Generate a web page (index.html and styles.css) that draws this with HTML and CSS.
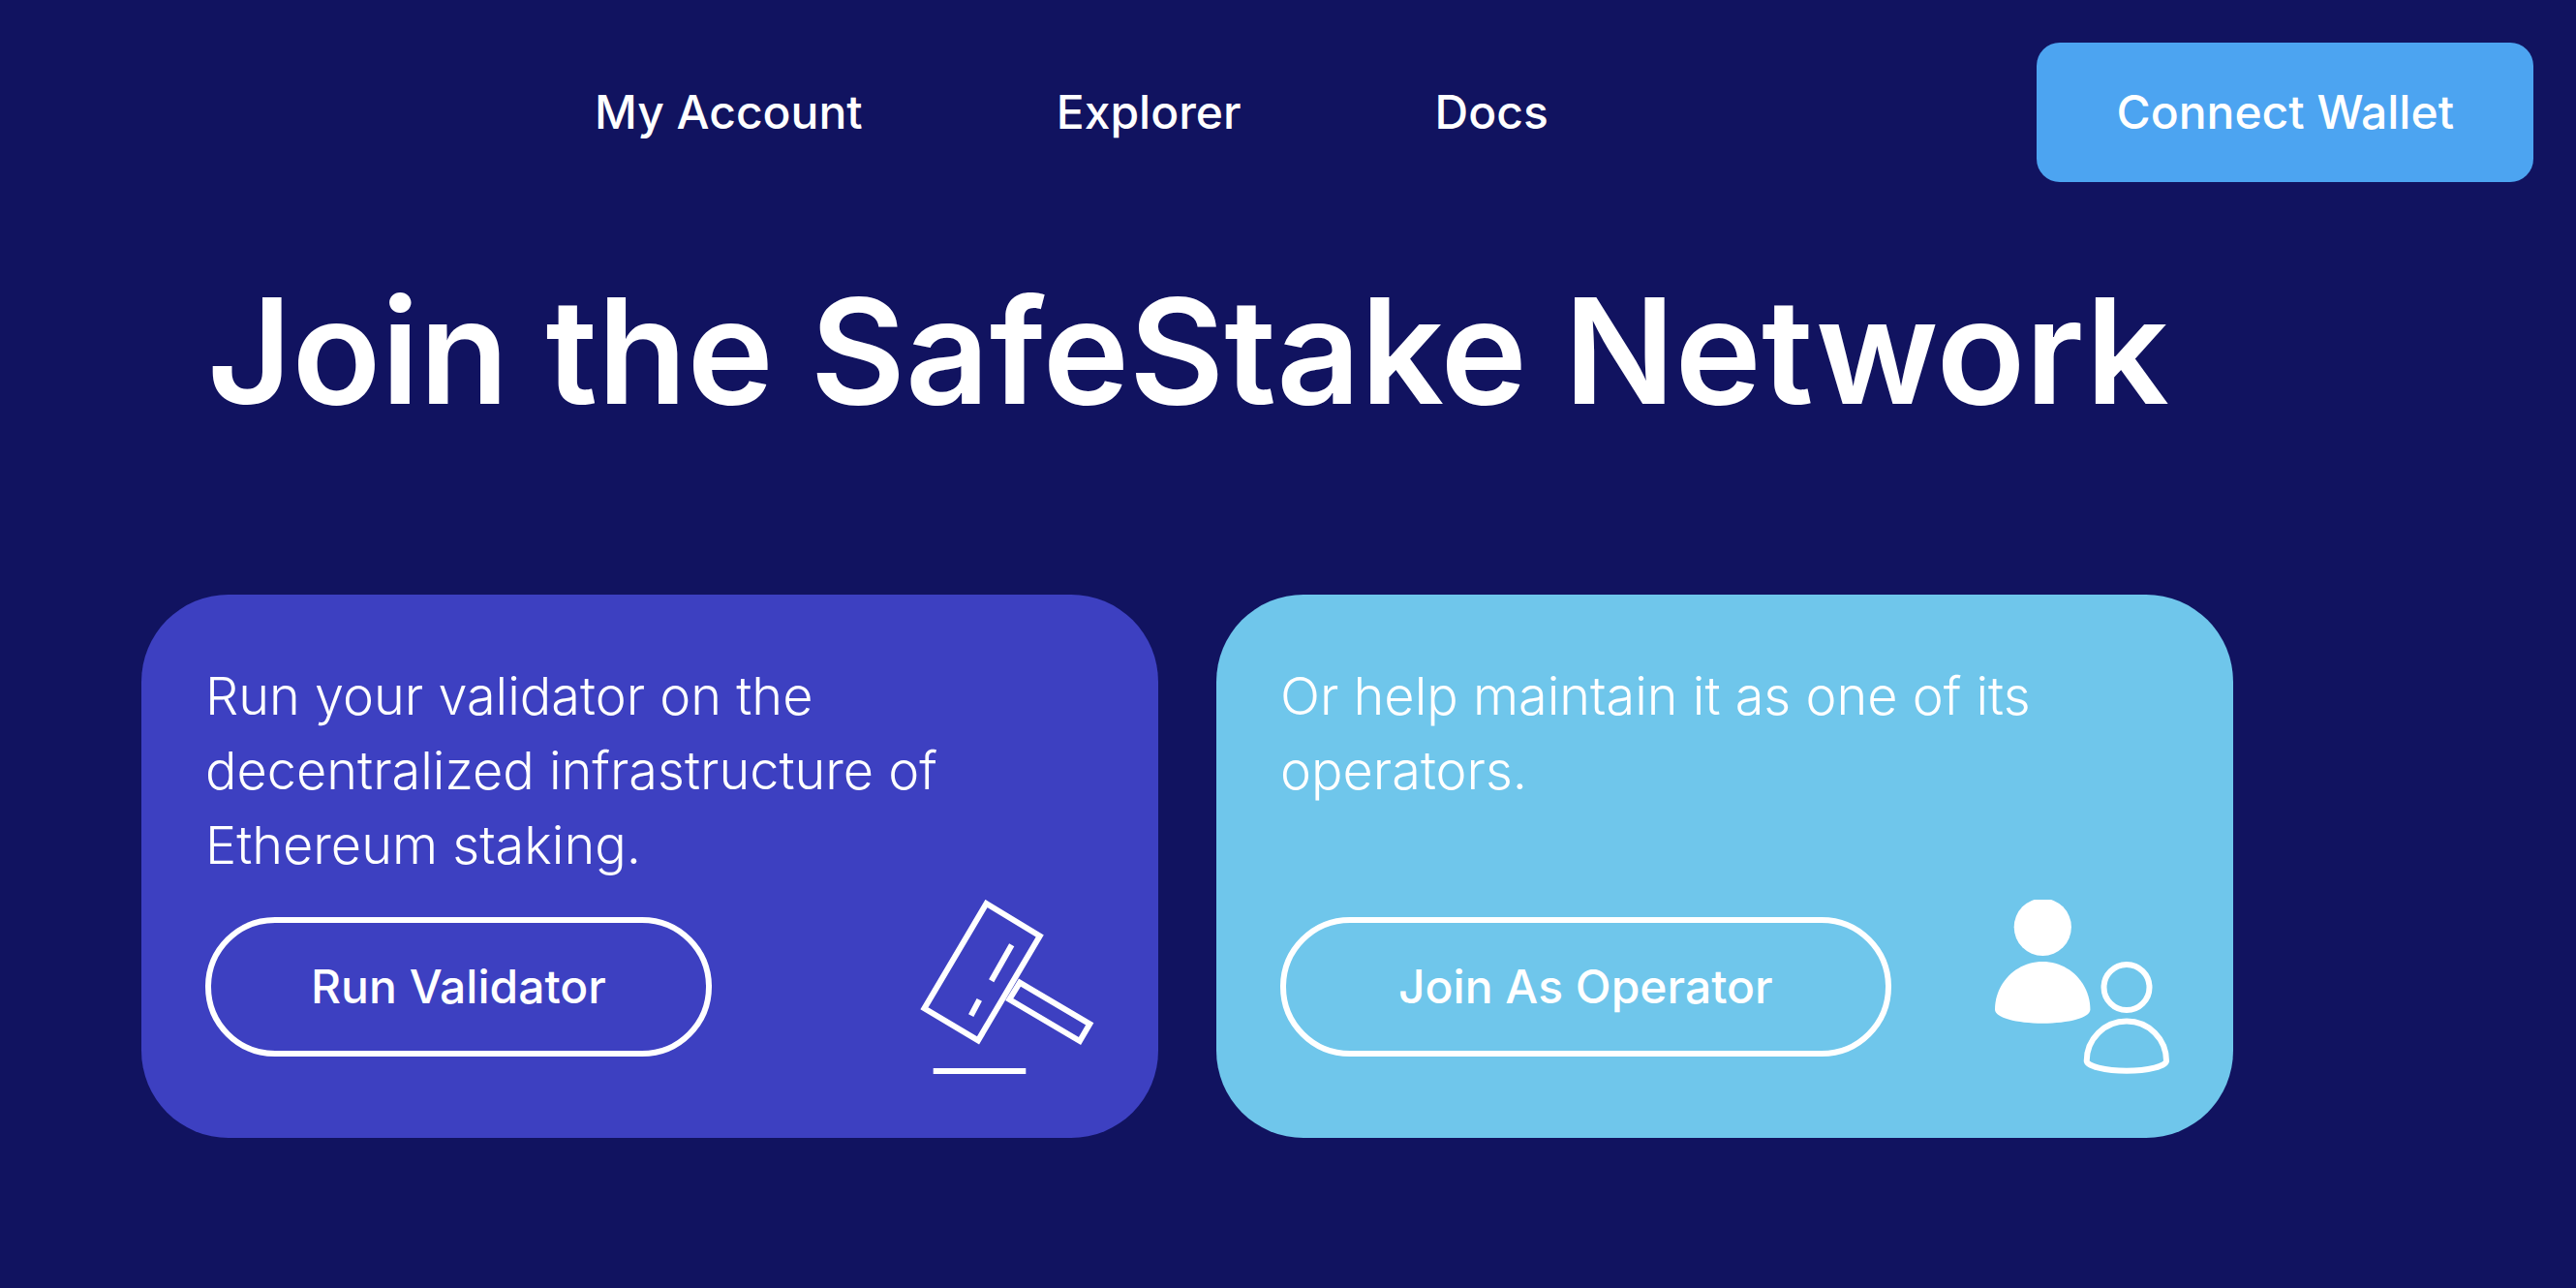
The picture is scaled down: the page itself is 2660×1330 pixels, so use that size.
FILE: index.html
```html
<!DOCTYPE html>
<html lang="en">
<head>
<meta charset="utf-8">
<meta name="viewport" content="width=device-width, initial-scale=1">
<title>SafeStake</title>
<link rel="stylesheet" href="styles.css">
</head>
<body>
<header class="header">
  <nav class="nav">
    <a class="nav-link" href="#account">My Account</a>
    <a class="nav-link" href="#explorer">Explorer</a>
    <a class="nav-link" href="#docs">Docs</a>
  </nav>
  <button class="connect" type="button">Connect Wallet</button>
</header>
<main class="main">
  <h1 class="title">Join the SafeStake Network</h1>
  <div class="cards">
    <section class="card card-validator">
      <p class="card-text">Run your validator on the decentralized infrastructure of Ethereum staking.</p>
      <div class="card-actions">
        <button class="pill" type="button">Run Validator</button>
        <svg class="icon" viewBox="0 0 180 180" fill="none" stroke="currentColor" stroke-width="6" aria-hidden="true">
          <path d="M68.5 4 123.7 37.5 60 145.3 4.5 112.3Z"/>
          <path d="M103 85.7 175.3 128.3 165 146 92.3 103Z"/>
          <path d="M94.7 46.7 73.7 83.7M61.3 103.3 52.7 119.7M13.7 177H109.3"/>
        </svg>
      </div>
    </section>
    <section class="card card-operator">
      <p class="card-text">Or help maintain it as one of its operators.</p>
      <div class="card-actions">
        <button class="pill pill-wide" type="button">Join As Operator</button>
        <svg class="icon" viewBox="0 0 180 180" fill="none" stroke="currentColor" stroke-width="6" aria-hidden="true">
          <circle cx="49.3" cy="28.3" r="29.6" fill="currentColor" stroke="none"/>
          <path d="M0 113.500C0 86 22 64 49.200 64S98.400 86 98.400 113.500C98.400 122 76 127.700 49.200 127.700S0 122 0 113.500Z" fill="currentColor" stroke="none"/>
          <circle cx="136" cy="90.500" r="23.500"/>
          <path d="M94.700 166.500C94.700 144 113 125.500 136 125.500S177 144 177 166.500C177 172 158 176.800 136 176.800S94.700 172 94.700 166.500Z"/>
        </svg>
      </div>
    </section>
  </div>
</main>
</body>
</html>
```
FILE: styles.css
```css
* {
  box-sizing: border-box;
}

body {
  margin: 0;
  min-height: 100vh;
  background: #111360;
  color: #fff;
  font-family: Inter, "Liberation Sans", sans-serif;
}

button {
  color: inherit;
  font: inherit;
  cursor: pointer;
}

.header {
  display: flex;
  align-items: center;
  justify-content: space-between;
  padding: 44px 44px 0 614px;
}

.nav {
  display: flex;
  gap: 200px;
}

.nav-link {
  color: inherit;
  font-size: 48px;
  font-weight: 500;
  line-height: 72px;
  text-decoration: none;
}

.connect {
  padding: 36px 82px;
  border: 0;
  border-radius: 24px;
  background: #4ca4f1;
  font-size: 48px;
  font-weight: 500;
  line-height: 72px;
}

.main {
  max-width: 2452px;
  padding: 72px 146px 0;
}

.title {
  margin: 0;
  padding-left: 68px;
  font-size: 151px;
  font-weight: 600;
  line-height: 204px;
}

.cards {
  display: grid;
  grid-template-columns: 1fr 1fr;
  gap: 60px;
  margin-top: 150px;
}

.card {
  display: flex;
  flex-direction: column;
  justify-content: space-between;
  gap: 18px;
  padding: 66px;
  border-radius: 90px;
}

.card-validator {
  background: #3d40c1;
}

.card-operator {
  background: #6fc6eb;
}

.card-text {
  margin: 0;
  font-size: 54px;
  font-weight: 300;
  line-height: 77px;
}

.card-actions {
  display: flex;
  align-items: center;
  justify-content: space-between;
}

.pill {
  padding: 30px 103px;
  border: 6px solid #fff;
  border-radius: 72px;
  background: transparent;
  font-size: 48px;
  font-weight: 500;
  line-height: 72px;
}

.pill-wide {
  padding: 30px 116px;
}

.icon {
  width: 180px;
  height: 180px;
}
```
